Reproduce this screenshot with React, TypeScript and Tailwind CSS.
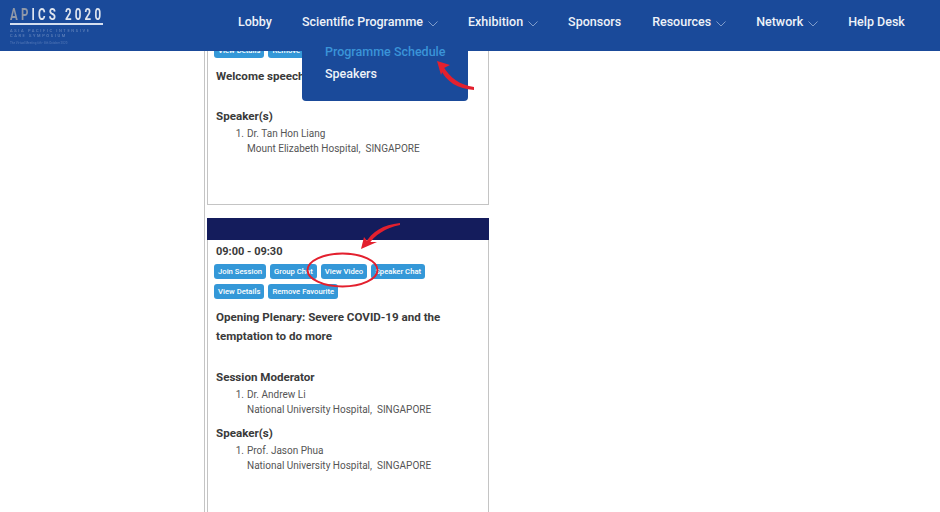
const Chevron = () => (
  <svg width="10" height="6" viewBox="0 0 10 6" className="ml-[5px] mt-[3px]" fill="none" stroke="#7f9ccb" strokeWidth="1">
    <path d="M0.5 0.5 L5 5 L9.5 0.5" />
  </svg>
);

const Logo = () => (
  <div className="w-[238px] shrink-0 pl-[10px] pt-[6px] blur-[0.4px]">
    <div className="w-[93px]">
      <div className="origin-left scale-x-[0.72] font-['Roboto'] text-[16px] leading-[17px] font-bold tracking-[4.4px] whitespace-nowrap text-[#dfe5ef]">
        <span className="text-[#8f98a8]">AP</span>ICS 2020
      </div>
      <div className="h-[1.5px] bg-[#d5dff0]" />
      <div className="mt-[3px] text-[4px] leading-[5px] tracking-[1.6px] text-[#5f80b9] whitespace-nowrap">
        ASIA PACIFIC INTENSIVE
        <br />
        CARE SYMPOSIUM
      </div>
      <div className="mt-[3px] text-[3px] leading-[4px] text-[#4a70b2] whitespace-nowrap">
        The Virtual Meeting 6th - 8th October 2020
      </div>
    </div>
  </div>
);

const Header = () => (
  <div className="relative z-10 h-[51px] flex bg-[#1a4a9a] text-[#eef2f8] font-['Roboto'] text-[12.5px] font-medium">
    <Logo />
    <div className="flex gap-[30px] h-full pb-[7px]">
      <div className="flex items-center">Lobby</div>
      <div className="relative flex items-center">
        Scientific Programme
        <Chevron />
        <div className="absolute top-[41px] left-0 w-[166px] h-[60px] pl-[23px] bg-[#1a4a9a] rounded-b-[4px]">
          <div className="h-[22px] leading-[22px] text-[#3a94d8]">Programme Schedule</div>
          <div className="h-[22px] leading-[22px]">Speakers</div>
        </div>
      </div>
      <div className="flex items-center">
        Exhibition
        <Chevron />
      </div>
      <div className="flex items-center">Sponsors</div>
      <div className="flex items-center ml-[1px]">
        Resources
        <Chevron />
      </div>
      <div className="flex items-center">
        Network
        <Chevron />
      </div>
      <div className="flex items-center">Help Desk</div>
    </div>
  </div>
);

const SessionButton = ({ label }: { label: string }) => (
  <div className="h-[15px] px-[4px] bg-[#3498d8] rounded-[3px] text-white text-[7.7px] font-medium leading-[15px] whitespace-nowrap">
    {label}
  </div>
);

type Person = { name: string; place: string };

const PersonList = ({ title, person }: { title: string; person: Person }) => (
  <div>
    <h3 className="text-[11.6px] leading-[16px] font-bold text-[#3a3a3a]">{title}</h3>
    <div className="flex mt-[2px] text-[10px] leading-[15px] text-[#555] whitespace-pre">
      <span className="w-[31px] pr-[3px] text-right">1.</span>
      <div>
        {person.name}
        <br />
        {person.place}
      </div>
    </div>
  </div>
);

type CardProps = {
  time?: string;
  buttons: string[];
  title: string;
  moderator?: Person;
  speaker: Person;
  height: string;
  titleHeight: string;
};

const SessionCard = ({ time, buttons, title, moderator, speaker, height, titleHeight }: CardProps) => (
  <div className="w-[282px] ml-[2px]">
    {time && <div className="h-[22px] bg-[#141c5c]" />}
    <div className={`border border-t-0 border-[#c4c4c4] pl-[8px] pr-[7px] ${height}`}>
      {time && <div className="mb-[4px] text-[11px] leading-[16px] font-bold text-[#3a3a3a]">{time}</div>}
      <div className="-ml-[2px] pr-[48px] flex flex-wrap gap-x-[4px] gap-y-[5px]">
        {buttons.map((b) => (
          <SessionButton key={b} label={b} />
        ))}
      </div>
      <div className={`mt-[9px] text-[11.6px] leading-[19px] font-bold text-[#3a3a3a] ${titleHeight}`}>{title}</div>
      {moderator && (
        <div className="mb-[8px]">
          <PersonList title="Session Moderator" person={moderator} />
        </div>
      )}
      <PersonList title="Speaker(s)" person={speaker} />
    </div>
  </div>
);

const Annotations = () => (
  <svg width="940" height="512" viewBox="0 0 940 512" className="absolute inset-0 z-20 pointer-events-none">
    <path d="M474 90 C 458 89 446 82 440 68 L 443 66 C 450 78 460 85 474 87 Z" fill="#e3202e" />
    <path d="M437 61 L450 65 L444 68 L441 75 Z" fill="#e3202e" />
    <path d="M400 223 C 383 225 372 231 365 244 L 368 245 C 375 235 385 228 400 225 Z" fill="#e3202e" />
    <path d="M361 249 L364 237 L368 242 L377 242 Z" fill="#e3202e" />
    <ellipse cx="342.5" cy="270" rx="35" ry="16.5" fill="none" stroke="#e3202e" strokeWidth="2" />
  </svg>
);

export default function App() {
  return (
    <div className="relative h-[512px] w-[940px] overflow-hidden bg-white font-['Roboto',sans-serif]">
      <Header />
      <div className="relative -mt-[16px] ml-[204px] w-[286px] border-l border-[#c4c4c4] flex flex-col gap-[13px]">
        <SessionCard
          buttons={["View Details", "Remove Favourite"]}
          title="Welcome speech"
          speaker={{ name: "Dr. Tan Hon Liang", place: "Mount Elizabeth Hospital,  SINGAPORE" }}
          height="h-[170px] pt-[8px]"
          titleHeight="h-[41px]"
        />
        <SessionCard
          time="09:00 - 09:30"
          buttons={["Join Session", "Group Chat", "View Video", "Speaker Chat", "View Details", "Remove Favourite"]}
          title="Opening Plenary: Severe COVID-19 and the temptation to do more"
          moderator={{ name: "Dr. Andrew Li", place: "National University Hospital,  SINGAPORE" }}
          speaker={{ name: "Prof. Jason Phua", place: "National University Hospital,  SINGAPORE" }}
          height="h-[300px] pt-[4px]"
          titleHeight="h-[61px]"
        />
      </div>
      <Annotations />
    </div>
  );
}
